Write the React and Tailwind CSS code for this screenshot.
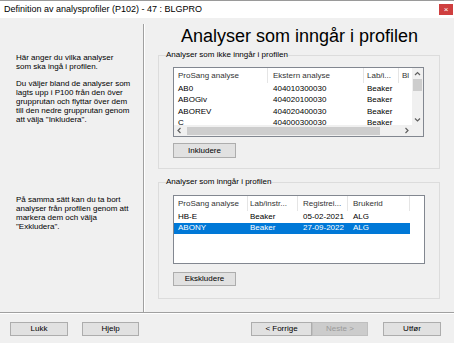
import React from 'react'

const font = "font-['Liberation_Sans',Arial,sans-serif]"

// knapp i windows-stil
const Knapp = ({ children, className = '', disabled = false }) => (
    <div className={`flex items-center justify-center border text-[8px] leading-none ${disabled ? 'bg-[#cccccc] border-[#bfbfbf] text-[#9a9a9a]' : 'bg-[#e1e1e1] border-[#adadad] text-black'} ${className}`}>
        {children}
    </div>
)

const Pil = ({ dir }) => {
    const d = {
        up: 'M2 6 L4.5 3.5 L7 6',
        down: 'M2 3.5 L4.5 6 L7 3.5',
        left: 'M5.5 2 L3 4.5 L5.5 7',
        right: 'M3.5 2 L6 4.5 L3.5 7',
    }[dir]
    return (
        <svg width="9" height="9" viewBox="0 0 9 9">
            <path d={d} fill="none" stroke="#606060" strokeWidth="1.2" />
        </svg>
    )
}

const ovreRader = [
    ['AB0', '404010300030', 'Beaker'],
    ['ABOGiv', '404020100030', 'Beaker'],
    ['ABOREV', '404020400030', 'Beaker'],
    ['C', '404000300030', 'Beaker'],
]

const nedreRader = [
    { a: 'HB-E', b: 'Beaker', c: '05-02-2021', d: 'ALG', sel: false },
    { a: 'ABONY', b: 'Beaker', c: '27-09-2022', d: 'ALG', sel: true },
]

const App = () => {
    return (
        <div className={`w-[454px] h-[343px] bg-[#f0f0f0] flex flex-col overflow-hidden ${font}`}>

            {/* tittellinje */}
            <div className="h-[18px] bg-white border-t border-[#9a9a9a] flex items-center justify-between pl-[4px] pr-[1px]">
                <span className="text-[9px] text-black leading-none">Definition av analysprofiler (P102) - 47 : BLGPRO</span>
                <div className="w-[14px] h-[11px] bg-[#cf3f3f] flex items-center justify-center text-white text-[8px] leading-none">×</div>
            </div>

            {/* hovedinnhold */}
            <div className="flex h-[294px]">

                {/* venstre tekst */}
                <div className="w-[143px] pl-[16px] pt-[35px] text-[8px] leading-[9px] text-black">
                    <p>Här anger du vilka analyser<br />som ska ingå i profilen.</p>
                    <p className="mt-[8px]">Du väljer bland de analyser som<br />lagts upp i P100 från den över<br />grupprutan och flyttar över dem<br />till den nedre grupprutan genom<br />att välja "Inkludera".</p>
                    <p className="mt-[71px]">På samma sätt kan du ta bort<br />analyser från profilen genom att<br />markera dem och välja<br />"Exkludera".</p>
                </div>

                {/* skillelinje */}
                <div className="w-[2px] mt-[6px] border-l border-[#a0a0a0] border-r border-r-white"></div>

                {/* høyre del */}
                <div className="flex-1 flex flex-col pl-[13px]">
                    <h1 className="pt-[9px] -ml-[13px] text-center text-[18px] leading-[18px] text-black">Analyser som inngår i profilen</h1>

                    {/* øvre gruppe */}
                    <fieldset className="mt-[5px] w-[282px] border border-[#dcdcdc] pb-[10px]">
                        <legend className="ml-[7px] text-[8px] leading-[10px] text-black">Analyser som ikke inngår i profilen</legend>
                        <div className="ml-[14px] mt-[7px] w-[251px] h-[70px] border border-[#828790] bg-white flex flex-col overflow-hidden">
                            <div className="flex flex-1 min-h-0">
                                <div className="flex-1 overflow-hidden text-[8px]">
                                    <div className="flex h-[15px] items-center text-[#333]">
                                        <div className="w-[94px] pl-[4px] border-r border-[#e5e5e5] h-full flex items-center">ProSang analyse</div>
                                        <div className="w-[96px] pl-[5px] border-r border-[#e5e5e5] h-full flex items-center">Ekstern analyse</div>
                                        <div className="w-[35px] pl-[3px] border-r border-[#e5e5e5] h-full flex items-center whitespace-nowrap">Lab/i...</div>
                                        <div className="w-[13px] pl-[3px] h-full flex items-center overflow-hidden">Bl</div>
                                    </div>
                                    {ovreRader.map((r, i) => (
                                        <div key={i} className="flex h-[11.5px] items-center text-black">
                                            <div className="w-[94px] pl-[4px]">{r[0]}</div>
                                            <div className="w-[96px] pl-[5px]">{r[1]}</div>
                                            <div className="w-[35px] pl-[3px]">{r[2]}</div>
                                        </div>
                                    ))}
                                </div>
                                {/* vertikal rullefelt */}
                                <div className="w-[11px] bg-[#f0f0f0] flex flex-col items-center">
                                    <div className="h-[11px] flex items-center justify-center"><Pil dir="up" /></div>
                                    <div className="w-[9px] h-[12px] bg-[#cdcdcd]"></div>
                                    <div className="flex-1"></div>
                                    <div className="h-[11px] flex items-center justify-center"><Pil dir="down" /></div>
                                </div>
                            </div>
                            {/* horisontal rullefelt */}
                            <div className="h-[11px] flex bg-[#f0f0f0]">
                                <div className="flex-1 flex items-center">
                                    <div className="w-[11px] flex items-center justify-center"><Pil dir="left" /></div>
                                    <div className="ml-[2px] w-[193px] h-[8px] bg-[#cdcdcd]"></div>
                                    <div className="flex-1"></div>
                                    <div className="w-[11px] flex items-center justify-center"><Pil dir="right" /></div>
                                </div>
                                <div className="w-[11px] bg-[#f0f0f0]"></div>
                            </div>
                        </div>
                        <Knapp className="ml-[14px] mt-[6px] w-[63px] h-[15px]">Inkludere</Knapp>
                    </fieldset>

                    {/* nedre gruppe */}
                    <fieldset className="mt-[8px] w-[282px] border border-[#dcdcdc] pb-[12px]">
                        <legend className="ml-[7px] text-[8px] leading-[10px] text-black">Analyser som inngår i profilen</legend>
                        <div className="ml-[14px] mt-[8px] w-[252px] h-[69px] border border-[#828790] bg-white overflow-hidden text-[8px]">
                            <div className="flex h-[15px] items-center text-[#333]">
                                <div className="w-[74px] pl-[4px] border-r border-[#e5e5e5] h-full flex items-center">ProSang analyse</div>
                                <div className="w-[50px] pl-[2px] border-r border-[#e5e5e5] h-full flex items-center whitespace-nowrap">Lab/instr...</div>
                                <div className="w-[50px] pl-[5px] border-r border-[#e5e5e5] h-full flex items-center whitespace-nowrap">Registrei...</div>
                                <div className="w-[62px] pl-[5px] border-r border-[#e5e5e5] h-full flex items-center">Brukerid</div>
                            </div>
                            {nedreRader.map((r, i) => (
                                <div key={i} className={`flex w-[236px] h-[11.5px] items-center ${r.sel ? 'bg-[#0078d7] text-white' : 'text-black'}`}>
                                    <div className="w-[74px] pl-[4px]">{r.a}</div>
                                    <div className="w-[50px] pl-[2px]">{r.b}</div>
                                    <div className="w-[50px] pl-[5px]">{r.c}</div>
                                    <div className="w-[62px] pl-[5px]">{r.d}</div>
                                </div>
                            ))}
                        </div>
                        <Knapp className="ml-[14px] mt-[8px] w-[63px] h-[14px]">Ekskludere</Knapp>
                    </fieldset>
                </div>
            </div>

            {/* knapperad */}
            <div className="border-t border-[#a0a0a0]">
                <div className="border-t border-white flex pt-[8px]">
                    <Knapp className="ml-[10px] w-[58px] h-[14px]">Lukk</Knapp>
                    <Knapp className="ml-[14px] w-[57px] h-[14px]">Hjelp</Knapp>
                    <Knapp className="ml-[112px] w-[61px] h-[14px]">&lt; Forrige</Knapp>
                    <Knapp disabled className="w-[56px] h-[14px]">Neste &gt;</Knapp>
                    <Knapp className="ml-[15px] w-[58px] h-[14px]">Utfør</Knapp>
                </div>
            </div>
        </div>
    )
}

export default App
